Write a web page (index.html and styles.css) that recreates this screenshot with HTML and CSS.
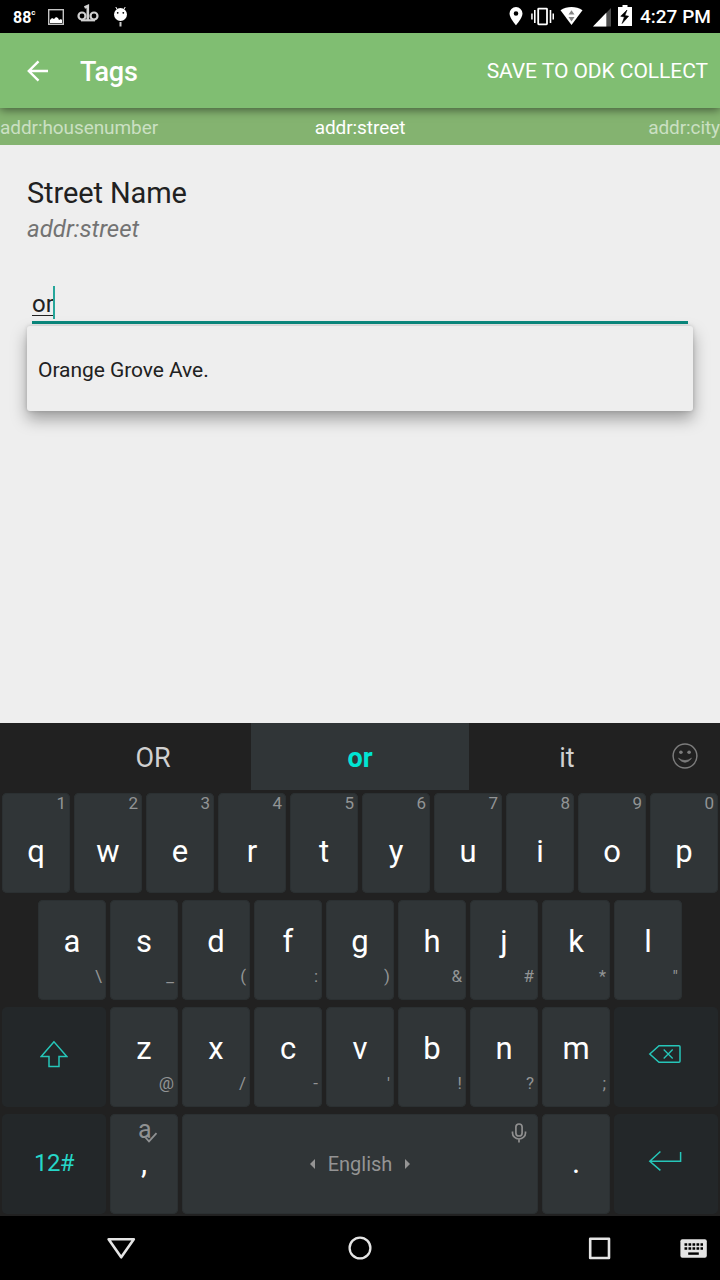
FILE: index.html
```
<!DOCTYPE html>
<html lang="en">
<head>
<meta charset="utf-8">
<title>Tags</title>
<link rel="stylesheet" href="styles.css">
</head>
<body>
<header class="status">
  <span class="temp">88<small>c</small></span>
  <svg class="notif" width="86" height="33" viewBox="46 0 86 33">
    <rect x="48.700" y="9.700" width="14.600" height="14.600" fill="none" stroke="#c4c4c4" stroke-width="1.400"/>
    <path d="M50 23v-3l2-2 2 1 2-2 2 1 1 2 2-1 1 1v3z" fill="#fff"/>
    <g fill="none" stroke="#d0d0d0" stroke-width="2.200"><circle cx="82" cy="16" r="3.500"/><circle cx="94" cy="16" r="3.500"/><path d="M81 20.300h14"/><path d="M84.500 7.500l3.300-1.500v14" stroke-width="2.600"/></g>
    <path d="M115.800 7l1.400 2.500M125.200 7l-1.400 2.500" stroke="#fff" stroke-width="1"/>
    <circle cx="120.500" cy="14.500" r="6.500" fill="#fff"/>
    <path d="M119.500 22h2v4.500h-2z" fill="#ccc"/><circle cx="117.700" cy="12.800" r=".9"/><circle cx="123.300" cy="12.800" r=".9"/>
  </svg>
  <span class="spacer"></span>
  <svg class="system" width="126" height="33" viewBox="508 0 126 33" fill="#fff">
    <path fill-rule="evenodd" d="M516 7a6.500 6.500 0 0 0-6.500 6.500c0 4.600 6.500 11.700 6.500 11.700s6.500-7.100 6.500-11.700A6.500 6.500 0 0 0 516 7zm0 4.200a2.300 2.300 0 1 1 0 4.600 2.300 2.300 0 0 1 0-4.600z"/>
    <rect x="538.200" y="8.700" width="8.800" height="15.600" rx=".5" fill="none" stroke="#fff" stroke-width="1.800"/>
    <path d="M534 10h1.600v13H534zM549.700 10h1.600v13h-1.600zM531.200 13.500h1.500v6h-1.500zM552.500 13.500h1.500v6h-1.500z"/>
    <path d="M560.500 10.300C567 6 576 6 582.500 10.300L571.500 25z"/>
    <path d="M571.500 10.200l3 4.300h-6zM571.500 21.500l3-4.500h-6z" fill="#858585"/>
    <path d="M611 8v18.500h-18z" fill="#4d4d4d"/><path d="M606.300 12.800v13.700H593z"/>
    <path d="M622.500 5h5v2h4.500v19h-14V7h4.500z"/><path d="M627 10l-6.300 6.200 3.700.8-2.300 6.500 6.500-7.300-3.700-.7z" fill="#000" stroke="#000" stroke-width=".6"/>
  </svg>
  <span class="clock">4:27 PM</span>
</header>
<div class="toolbar">
  <svg class="back" width="22" height="22" viewBox="0 0 22 22" fill="none" stroke="#fff" stroke-width="2.400"><path d="M21 11H2M11.500 1.300L1.800 11l9.700 9.700"/></svg>
  <h1>Tags</h1>
  <span class="save">SAVE TO ODK COLLECT</span>
</div>
<nav class="tabs"><span>addr:housenumber</span><span class="current">addr:street</span><span>addr:city</span></nav>
<main class="form">
  <h2>Street Name</h2>
  <p class="tag">addr:street</p>
  <div class="field"><span class="typed">or</span><i class="caret"></i>
    <div class="popup">Orange Grove Ave.</div>
  </div>
</main>
<section class="keyboard">
  <div class="suggest">
    <span></span><span>OR</span><span class="chosen">or</span><span>it</span>
    <svg class="smile" width="28" height="28" viewBox="0 0 28 28" fill="none" stroke="#7c7c7c" stroke-width="1.500"><circle cx="14" cy="14" r="11.900"/><path d="M7.500 16.300q6.500 8 13 0q-6.500 4.500-13 0z" fill="#7c7c7c" stroke-width=".7"/><circle cx="9.900" cy="10.300" r="1.800" fill="#7c7c7c" stroke="none"/><circle cx="18.100" cy="10.300" r="1.800" fill="#7c7c7c" stroke="none"/></svg>
  </div>
  <div class="row top">
    <div class="key"><small>1</small><b>q</b></div><div class="key"><small>2</small><b>w</b></div><div class="key"><small>3</small><b>e</b></div><div class="key"><small>4</small><b>r</b></div><div class="key"><small>5</small><b>t</b></div><div class="key"><small>6</small><b>y</b></div><div class="key"><small>7</small><b>u</b></div><div class="key"><small>8</small><b>i</b></div><div class="key"><small>9</small><b>o</b></div><div class="key"><small>0</small><b>p</b></div>
  </div>
  <div class="row home">
    <div class="key"><b>a</b><small>\</small></div><div class="key"><b>s</b><small>_</small></div><div class="key"><b>d</b><small>(</small></div><div class="key"><b>f</b><small>:</small></div><div class="key"><b>g</b><small>)</small></div><div class="key"><b>h</b><small>&amp;</small></div><div class="key"><b>j</b><small>#</small></div><div class="key"><b>k</b><small>*</small></div><div class="key"><b>l</b><small>"</small></div>
  </div>
  <div class="row">
    <div class="key wide"><svg class="shift" width="28" height="28" viewBox="0 0 28 28" fill="none" stroke="#26c6b9" stroke-width="1.500"><path d="M14 1.800L1.200 16.600H9V26.400h10V16.600h7.800z"/></svg></div>
    <div class="key"><b>z</b><small>@</small></div><div class="key"><b>x</b><small>/</small></div><div class="key"><b>c</b><small>-</small></div><div class="key"><b>v</b><small>'</small></div><div class="key"><b>b</b><small>!</small></div><div class="key"><b>n</b><small>?</small></div><div class="key"><b>m</b><small>;</small></div>
    <div class="key wide"><svg class="erase" width="34" height="20" viewBox="0 0 34 20" fill="none" stroke="#26c6b9" stroke-width="1.500"><path d="M1.800 10L11 1.800H31q1 0 1 1V17.200q0 1-1 1H11z"/><path d="M15.700 5.500l9 9M24.700 5.500l-9 9" stroke-width="1.300"/></svg></div>
  </div>
  <div class="row">
    <div class="key wide symbols">12#</div>
    <div class="key comma"><span class="spell">a<svg width="14" height="11" viewBox="0 0 14 11" fill="none" stroke="#8f9192" stroke-width="1.800"><path d="M1.500 5.500l3.500 3.800L12.500 1.200"/></svg></span><b>,</b></div>
    <div class="key space">
      <svg class="arrow" width="5" height="10" viewBox="0 0 5 10" fill="#949494"><path d="M5 0v10L0 5z"/></svg><span>English</span><svg class="arrow" width="5" height="10" viewBox="0 0 5 10" fill="#949494"><path d="M0 0v10l5-5z"/></svg>
      <svg class="mic" width="16" height="20" viewBox="0 0 16 20" fill="none" stroke="#8f8f8f" stroke-width="1.700"><rect x="4.900" y="1" width="6.200" height="12" rx="3.100"/><path d="M1.500 8.500v1.500a6.500 6 0 0 0 13 0V8.500M8 16v3.500"/></svg>
    </div>
    <div class="key dot"><b>.</b></div>
    <div class="key wide"><svg class="enter" width="34" height="22" viewBox="0 0 34 22" fill="none" stroke="#26c6b9" stroke-width="1.500"><path d="M12.400 1.500L1.800 11.200l10.600 9.200M1.800 11.200H32.600V2"/></svg></div>
  </div>
</section>
<footer class="system-nav">
  <svg width="720" height="64" viewBox="0 0 720 64" fill="none" stroke="#e4e4e4" stroke-width="2.600" stroke-linejoin="round">
    <path d="M108.600 23.200h25.200L121.200 41.300z"/>
    <circle cx="360" cy="32" r="10.400" stroke-width="2.300"/>
    <rect x="590.200" y="22.800" width="18.800" height="19.200"/>
    <rect x="680.400" y="23.300" width="26.400" height="18.400" rx="2" fill="#e4e4e4" stroke="none"/>
    <path d="M684.500 28.500H703M684.500 32.500H703" stroke="#000" stroke-width="2.400" stroke-dasharray="2.700 1.300"/>
    <path d="M688.200 37.600h10.600" stroke="#000" stroke-width="2.400"/>
  </svg>
</footer>
</body>
</html>
```
FILE: styles.css
```
* { box-sizing: border-box; }
body { margin: 0; width: 720px; height: 1280px; overflow: hidden; background: #eee; color: #212121; font-family: Roboto, sans-serif; display: flex; flex-direction: column; }
svg { display: block; flex: none; }
h1, h2, p { margin: 0; font-weight: 400; }
.status { height: 33px; background: #000; color: #fff; display: flex; align-items: center; padding-right: 8px; }
.temp { width: 46px; padding: 1px 0 0 13px; font-size: 16px; font-weight: 700; display: flex; }
.temp small { font-size: 8px; line-height: 10px; }
.spacer { flex: 1; }
.clock { margin-left: 6px; width: 72px; font-size: 19px; font-weight: 500; white-space: nowrap; line-height: 34px; padding-top: 1px; }
.toolbar { position: relative; height: 75px; background: #80be72; color: #fff; display: flex; align-items: center; padding: 0 12px 0 27px; box-shadow: 0 2px 9px rgba(0,0,0,.5); z-index: 1; }
.toolbar h1 { margin-left: 31px; flex: 1; font-size: 27px; font-weight: 500; line-height: 75px; padding-top: 3px; letter-spacing: -0.2px; }
.save { font-size: 21px; letter-spacing: -0.06px; }
.tabs { height: 37px; background: #84b370; color: #cbe0c3; display: grid; grid-template-columns: 1fr auto 1fr; font-size: 19px; letter-spacing: -0.08px; line-height: 39px; }
.tabs span:last-child { text-align: right; }
.tabs .current { color: #fff; }
.form { height: 578px; padding: 30px 27px 0; }
.form h2 { font-size: 29px; line-height: 36px; letter-spacing: -0.1px; }
.tag { font-size: 24px; line-height: 36px; font-style: italic; color: #737373; }
.field { position: relative; margin: 38px 5px 0; height: 40px; border-bottom: 3px solid #0b8a7e; display: flex; margin-top: 37px; }
.typed { height: 32px; font-size: 24px; line-height: 41px; text-decoration: underline; text-decoration-thickness: 1px; text-underline-offset: 3px; }
.caret { width: 2px; height: 33px; margin-top: 2px; background: #26a69a; margin-left: -1px; }
.popup { position: absolute; left: -5px; right: -5px; top: 42px; height: 85px; padding-left: 11px; border-radius: 3px; background: #eee; font-size: 21px; line-height: 88px; letter-spacing: -0.06px; box-shadow: 0 8px 16px rgba(0,0,0,.34), 0 0 4px rgba(0,0,0,.15); }
.keyboard { height: 493px; background: #212121; }
.suggest { height: 67px; margin-bottom: 3px; display: grid; grid-template-columns: 55px 196px 218px 196px 55px; grid-template-rows: 67px; text-align: center; font-size: 27px; line-height: 70px; color: #d0d0d0; }
.suggest .chosen { background: #303537; color: #00e5d3; font-weight: 700; }
.smile { margin: 19px 0 0 6px; }
.row { height: 99px; margin-bottom: 8px; padding: 0 2px; display: flex; gap: 4px; }
.home { padding: 0 38px; }
.key { width: 68px; height: 99.5px; border-radius: 5px; background: #303537; box-shadow: inset 0 0 0 1px #2b3032; color: #fff; display: flex; flex-direction: column; }
.key b { font-size: 31px; font-weight: 400; line-height: 36px; text-align: center; padding-top: 24px; }
.key small { font-size: 17px; line-height: 20px; color: #929495; text-align: right; padding-right: 4px; margin-top: 6px; }
.top .key b { padding-top: 20px; }
.top .key small { line-height: 21px; margin: 0; }
.key.wide { width: 104px; background: #232729; box-shadow: none; }
.shift { margin: 33px 0 0 37.5px; }
.erase { margin: 37px 0 0 34px; }
.key.symbols { font-size: 24px; letter-spacing: -0.6px; line-height: 98px; text-align: center; color: #26d6c8; display: block; }
.spell { height: 30px; padding-left: 28px; font-size: 25px; line-height: 31px; color: #8f9192; display: flex; }
.spell svg { margin: 18px 0 0 -8px; }
.comma b { padding-top: 1px; }
.dot b { padding-top: 31px; }
.key.space { position: relative; width: 356px; flex-direction: row; align-items: center; justify-content: center; gap: 13px; font-size: 20px; color: #949494; }
.mic { position: absolute; right: 11px; top: 9px; }
.enter { margin: 36px 0 0 34px; }
.system-nav { height: 64px; background: #000; }
```
